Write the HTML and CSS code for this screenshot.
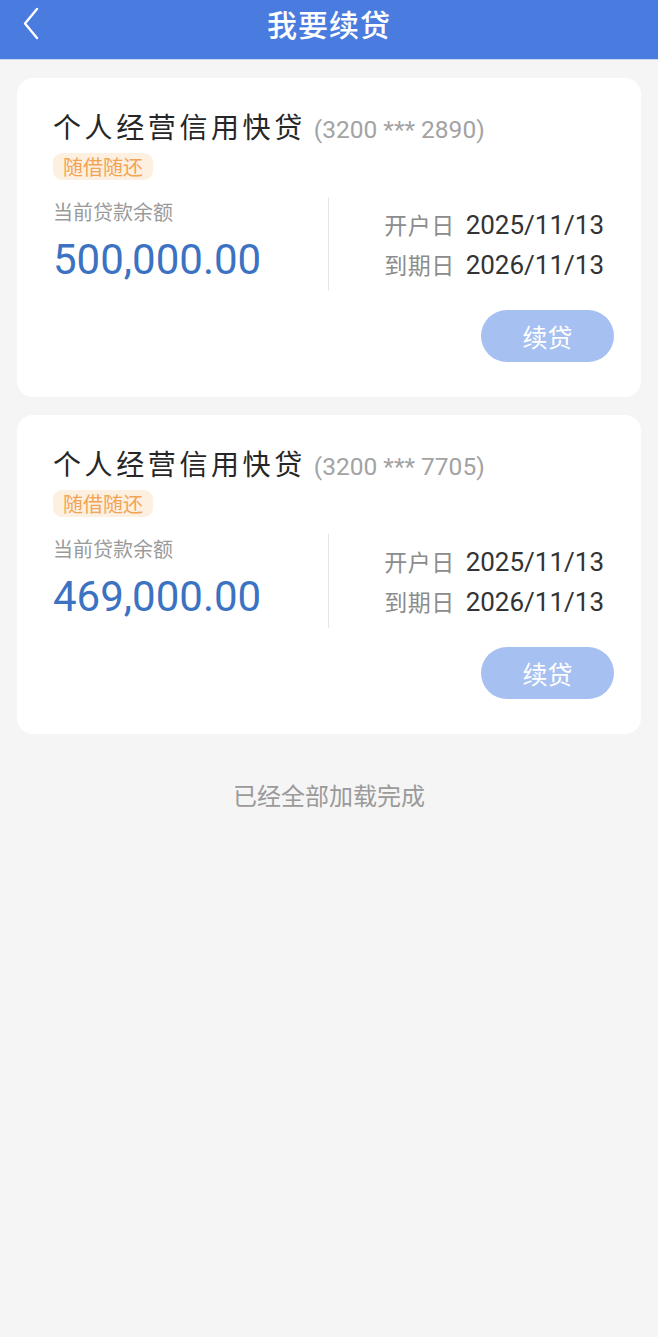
FILE: index.html
```html
<!DOCTYPE html>
<html lang="zh-CN">
<head>
<meta charset="utf-8">
<title>我要续贷</title>
<link rel="stylesheet" href="styles.css">
</head>
<body>
<header class="header">
  <svg class="back" width="20" height="34" viewBox="0 0 20 34"><polyline points="15,2 3,16.5 15,31" fill="none" stroke="#fff" stroke-width="2.4" stroke-linecap="round" stroke-linejoin="round"/></svg>
  <h1 class="header-title">我要续贷</h1>
</header>
<main class="list">
  <section class="card">
    <div class="title-row"><span class="name">个人经营信用快贷</span><span class="acct">(3200 *** 2890)</span></div>
    <div class="tag">随借随还</div>
    <div class="body">
      <div class="left">
        <div class="label">当前贷款余额</div>
        <div class="amount">500,000.00</div>
      </div>
      <div class="divider"></div>
      <div class="right">
        <div class="info"><span class="k">开户日</span><span class="v">2025/11/13</span></div>
        <div class="info"><span class="k">到期日</span><span class="v">2026/11/13</span></div>
      </div>
    </div>
    <div class="actions"><button class="btn">续贷</button></div>
  </section>
  <section class="card">
    <div class="title-row"><span class="name">个人经营信用快贷</span><span class="acct">(3200 *** 7705)</span></div>
    <div class="tag">随借随还</div>
    <div class="body">
      <div class="left">
        <div class="label">当前贷款余额</div>
        <div class="amount">469,000.00</div>
      </div>
      <div class="divider"></div>
      <div class="right">
        <div class="info"><span class="k">开户日</span><span class="v">2025/11/13</span></div>
        <div class="info"><span class="k">到期日</span><span class="v">2026/11/13</span></div>
      </div>
    </div>
    <div class="actions"><button class="btn">续贷</button></div>
  </section>
  <div class="done">已经全部加载完成</div>
</main>
</body>
</html>
```
FILE: styles.css
```css
html, body {
  margin: 0;
  padding: 0;
  background: #f5f5f5;
  font-family: Roboto, "Noto Sans CJK SC", sans-serif;
}
.header {
  height: 59px;
  background: #4a7bdf;
  position: relative;
  display: flex;
  justify-content: center;
  border-bottom: 1px solid #c9d7f3;
}
.back {
  position: absolute;
  left: 22px;
  top: 7px;
}
.header-title {
  margin: 0;
  font-size: 30px;
  letter-spacing: 1px;
  font-weight: 500;
  line-height: 47px;
  color: #fff;
  font-family: "Noto Sans CJK SC", sans-serif;
}
.list {
  padding: 18px 17px 0 17px;
  display: flex;
  flex-direction: column;
  gap: 18px;
}
.card {
  background: #fff;
  border-radius: 16px;
  padding: 30px 27px 35px 36px;
}
.title-row {
  display: flex;
  align-items: baseline;
  line-height: 36px;
  height: 36px;
}
.name {
  font-size: 28px;
  letter-spacing: 3.6px;
  color: #262626;
  font-family: "Noto Sans CJK SC", sans-serif;
}
.acct {
  font-size: 24.5px;
  color: #a3a3a3;
  margin-left: 8px;
}
.tag {
  display: inline-block;
  margin-top: 9px;
  height: 27px;
  line-height: 27px;
  padding: 0 10px;
  border-radius: 9px;
  background: #fdf0e0;
  color: #f2a456;
  font-size: 20px;
  font-family: "Noto Sans CJK SC", sans-serif;
}
.body {
  display: flex;
  margin-top: 17px;
  height: 94px;
}
.left {
  width: 275px;
  padding-top: 3px;
}
.label {
  font-size: 20px;
  line-height: 24px;
  color: #9a9a9a;
  font-family: "Noto Sans CJK SC", sans-serif;
}
.amount {
  margin-top: 12px;
  font-size: 42px;
  line-height: 48px;
  color: #3b72c2;
}
.divider {
  width: 1px;
  background: #e6e6e6;
}
.right {
  flex: 1;
  padding-top: 7px;
  padding-right: 10px;
  display: flex;
  flex-direction: column;
  align-items: flex-end;
}
.info {
  display: flex;
  align-items: baseline;
  height: 40px;
  line-height: 40px;
  white-space: nowrap;
}
.k {
  font-size: 23px;
  letter-spacing: 0.5px;
  color: #8c8c8c;
  margin-right: 11px;
  font-family: "Noto Sans CJK SC", sans-serif;
}
.v {
  font-size: 26px;
  color: #333;
}
.actions {
  display: flex;
  justify-content: flex-end;
  margin-top: 19px;
}
.btn {
  width: 133px;
  height: 52px;
  border: 0;
  border-radius: 26px;
  background: #a6c0f1;
  color: #fff;
  font-size: 25px;
  font-family: "Noto Sans CJK SC", sans-serif;
  padding: 0;
}
.done {
  margin-top: 28px;
  text-align: center;
  font-size: 24px;
  line-height: 30px;
  color: #9a9a9a;
  font-family: "Noto Sans CJK SC", sans-serif;
}
```
